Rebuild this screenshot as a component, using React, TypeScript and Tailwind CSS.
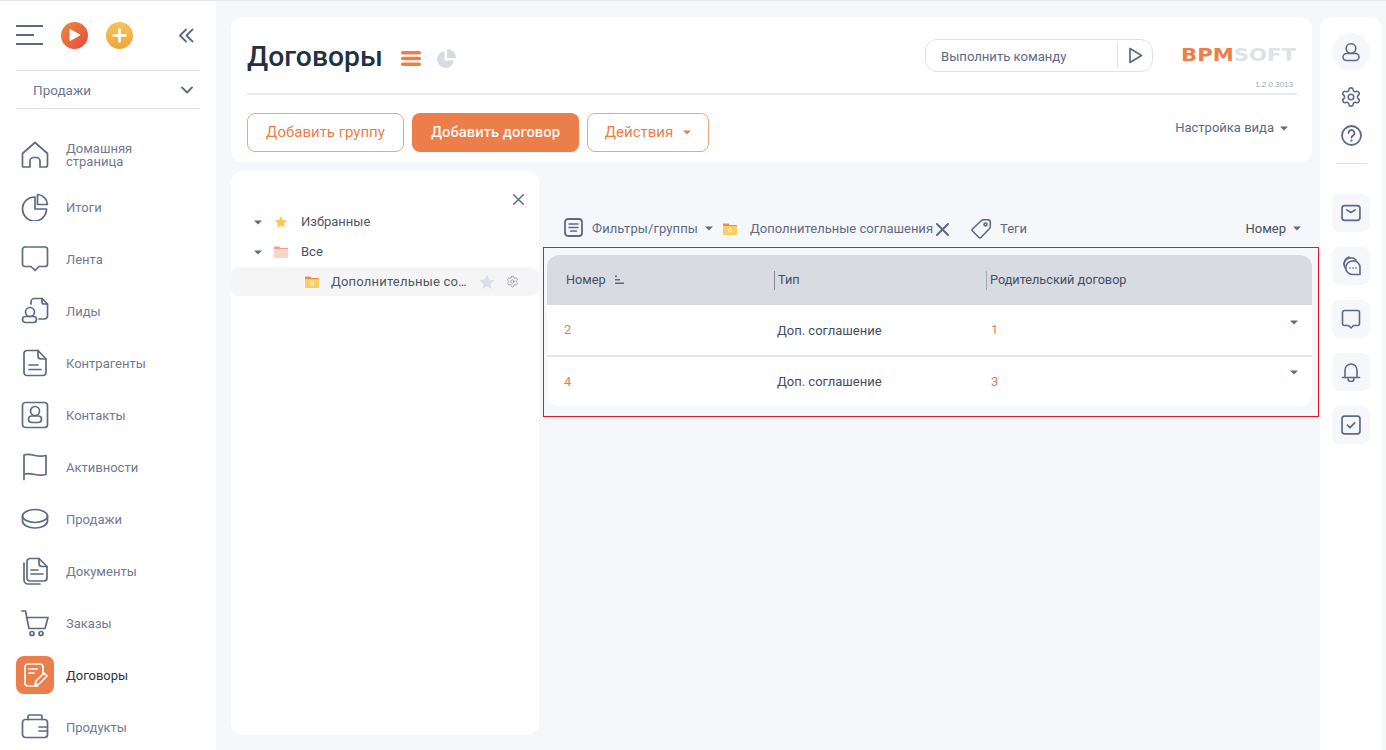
import React from "react";
import { Settings } from "lucide-react";

const S = "#5d6a87";
function Ico({ children, size = 28, vb = 28, sw = 1.7, color = S, cls = "" }: { children: React.ReactNode; size?: number; vb?: number; sw?: number; color?: string; cls?: string }) {
  return (
    <svg width={size} height={size} viewBox={`0 0 ${vb} ${vb}`} fill="none" stroke={color} strokeWidth={sw} strokeLinecap="round" strokeLinejoin="round" className={`shrink-0 ${cls}`}>
      {children}
    </svg>
  );
}
function Caret({ color = "#5d6a87", w = 8 }: { color?: string; w?: number }) {
  return (
    <svg width={w} height={w / 2 + 1} viewBox="0 0 8 5" className="shrink-0">
      <path d="M0 0.5h8L4 4.5z" fill={color} />
    </svg>
  );
}
const nav: { t: React.ReactNode; i: React.ReactNode; active?: boolean }[] = [
  { t: <>Домашняя<br />страница</>, i: <path d="M1.5 25V12.5L14 1.5l12.500 11V24a2 2 0 0 1-2 2H19v-6a3.500 3.500 0 0 0-3.500-3.500h-3A3.500 3.500 0 0 0 9 20v6H2.500a1 1 0 0 1-1-1z" /> },
  { t: "Итоги", i: <><path d="M14 4a12 12 0 1 0 11.500 12H14z" /><path d="M16.500 1.500a10.500 10.500 0 0 1 10 10h-10z" /></> },
  { t: "Лента", i: <path d="M4 2h20a2.500 2.500 0 0 1 2.500 2.500V19a2.500 2.500 0 0 1-2.500 2.500h-6L14 25.500 10 21.500H4A2.500 2.500 0 0 1 1.500 19V4.500A2.500 2.500 0 0 1 4 2z" /> },
  { t: "Лиды", i: <><path d="M10 7V5a3.500 3.500 0 0 1 3.500-3.500H21L26.500 7v12a3 3 0 0 1-3 3H18" /><path d="M21 1.500V5a2 2 0 0 0 2 2h3.500" /><circle cx="9" cy="15" r="4.500" /><rect x="1.500" y="19.500" width="14" height="6" rx="3" /></> },
  { t: "Контрагенты", i: <><path d="M6 1.500h11L25 10v13.500a3 3 0 0 1-3 3H6a3 3 0 0 1-3-3v-19a3 3 0 0 1 3-3z" /><path d="M17 1.500V7a3 3 0 0 0 3 3h5" /><path d="M8 16h9M8 20.500h12" /></> },
  { t: "Контакты", i: <><rect x="1.500" y="1.500" width="25" height="25" rx="3" /><circle cx="14" cy="10" r="4.500" /><rect x="7.500" y="15" width="13" height="6.500" rx="3.200" /></> },
  { t: "Активности", i: <path d="M3 26.500V2c4-1.500 7-.500 11 .500s7 1 11 0v19c-4 1-7 1-11 0s-7-1.500-11-.500" /> },
  { t: "Продажи", i: <><ellipse cx="14" cy="11" rx="12.500" ry="6.500" /><path d="M1.500 11v5c0 4 5.500 7 12.500 7s12.500-3 12.500-7v-5" /></> },
  { t: "Документы", i: <><path d="M6 5v17a4 4 0 0 0 4 4h12" transform="translate(-3 1)" /><path d="M9 1.500h9L26 9.500V21a3 3 0 0 1-3 3H9a3 3 0 0 1-3-3V4.500a3 3 0 0 1 3-3z" /><path d="M18 1.500V6.500a3 3 0 0 0 3 3h5" /><path d="M10 13h7M10 17h12" /></> },
  { t: "Заказы", i: <><path d="M1 2h3.500L8 19.500h16l3-11H5.500" /><circle cx="11" cy="24.500" r="2" /><circle cx="20" cy="24.500" r="2" /></> },
  { t: "Договоры", active: true, i: <><path d="M22 12V6a3 3 0 0 0-3-3H7a3 3 0 0 0-3 3v16a3 3 0 0 0 3 3h10" /><path d="M8 8h8M8 12h5" /><path d="M14 24l1-4 8-8 3 3-8 8z" /></> },
  { t: "Продукты", i: <><rect x="1.500" y="6.500" width="25" height="18" rx="3" /><path d="M7 6.500V3.500a1.500 1.500 0 0 1 1.500-1.500h11A1.500 1.500 0 0 1 21 3.500v3" /><path d="M18 14h8.500M18 18h8.500" /></> },
];

function Folder({ base, top, mark }: { base: string; top: string; mark?: boolean }) {
  return (
    <svg width="14" height="12" viewBox="0 0 14 12" className="shrink-0">
      <path d="M0 1h5.500l1 1H14v10H0z" fill={base} />
      <path d="M0 0.500h5.500l1 1.500H14v1H0z" fill={top} />
      {mark && <circle cx="7" cy="7.500" r="1.500" fill="none" stroke="#fff" strokeWidth="0.800" />}
    </svg>
  );
}

function Side({ children }: { children: React.ReactNode }) {
  return <div className="w-[38px] h-[38px] rounded-lg bg-[#f5f7fb] flex items-center justify-center">{children}</div>;
}

export default function App() {
  return (
    <div className="w-[1386px] h-[750px] overflow-hidden bg-[#f5f7fb] border-t border-[#e4e6ea] flex text-[13px] text-[#5d6a87]" style={{ fontFamily: "Roboto, 'Noto Sans', sans-serif" }}>
      {/* left sidebar */}
      <aside className="w-[216px] shrink-0 bg-white flex flex-col overflow-hidden">
        <div className="h-[69px] shrink-0 pl-4 pr-[22px] flex items-center pb-[1px]">
          <div className="w-[27px] flex flex-col gap-[7px]">
            <div className="h-[2px] w-[27px] bg-[#5d6a87]" />
            <div className="h-[2px] w-[18px] bg-[#5d6a87]" />
            <div className="h-[2px] w-[27px] bg-[#5d6a87]" />
          </div>
          <div className="ml-[18px] w-[27px] h-[27px] rounded-full bg-gradient-to-br from-[#ec8a3c] to-[#e5443f] flex items-center justify-center">
            <svg width="12" height="14" viewBox="0 0 12 14"><path d="M1 1.500L11 7 1 12.500z" fill="#fff" stroke="#fff" strokeLinejoin="round" /></svg>
          </div>
          <div className="ml-[18px] w-[27px] h-[27px] rounded-full bg-gradient-to-b from-[#f4c55a] to-[#eaa63c] flex items-center justify-center">
            <svg width="15" height="15" viewBox="0 0 15 15"><path d="M7.500 1.500v12M1.500 7.500h12" stroke="#fff" strokeWidth="2.600" strokeLinecap="round" /></svg>
          </div>
          <svg width="15" height="15" viewBox="0 0 15 15" className="ml-auto" fill="none" stroke={S} strokeWidth="1.800" strokeLinecap="round" strokeLinejoin="round"><path d="M7 1.500L1 7.500l6 6M13.500 1.500l-6 6 6 6" /></svg>
        </div>
        <div className="mx-4 h-[39px] shrink-0 border-y border-[#dfe2e9] flex items-center pl-[17px] pr-[7px] text-[13.500px] text-[#6d7892]">
          <span className="pt-[1px]">Продажи</span>
          <svg width="12" height="8" viewBox="0 0 12 8" className="ml-auto" fill="none" stroke={S} strokeWidth="1.800" strokeLinecap="round" strokeLinejoin="round"><path d="M1 1.500l5 5 5-5" /></svg>
        </div>
        <nav className="mt-[20px] flex flex-col">
          {nav.map((n, i) => (
            <div key={i} className="h-[52px] shrink-0 flex items-center pl-4">
              <div className={`w-[38px] h-[38px] rounded-lg flex items-center justify-center ${n.active ? "bg-[#ec7e4b]" : ""}`}>
                <Ico color={n.active ? "#ffffff" : S}>{n.i}</Ico>
              </div>
              <span className={`ml-3 text-[13px] leading-[13px] ${n.active ? "text-[#2b3445]" : "text-[#6f7a94]"}`}>{n.t}</span>
            </div>
          ))}
        </nav>
      </aside>

      {/* centre */}
      <main className="w-[1081px] ml-[15px] shrink-0 flex flex-col pt-4">
        <header className="h-[145px] shrink-0 bg-white rounded-xl pl-4 pr-[15px] flex flex-col">
          <div className="h-[78px] shrink-0 border-b-2 border-[#e8ebf0] flex items-start">
            <h1 className="mt-[18px] text-[28.300px] leading-[44px] font-medium text-[#25303f]">Договоры</h1>
            <svg width="20" height="15" viewBox="0 0 20 15" className="ml-[18px] mt-[34px]" fill="#ec7e4b"><rect width="20" height="3.600" rx="1.800" /><rect y="5.700" width="20" height="3.600" rx="1.800" /><rect y="11.400" width="20" height="3.600" rx="1.800" /></svg>
            <svg width="20" height="20" viewBox="0 0 20 20" className="ml-[15px] mt-[32px]" fill="#d8dbe3"><path d="M8.500 2a8.500 8.500 0 1 0 9.500 9.500H8.500z" /><path d="M11 0a9 9 0 0 1 9 9h-9z" /></svg>
            <div className="ml-auto flex flex-col items-end">
              <div className="flex items-center mt-[22px]">
                <div className="w-[228px] h-[33px] rounded-xl border border-[#dfe2e9] flex items-center pl-[15px] text-[13.100px] text-[#5d6a87]">
                  <span className="pt-[2px]">Выполнить команду</span>
                  <div className="ml-auto w-px h-[24px] bg-[#dfe2e9]" />
                  <svg width="15" height="17" viewBox="0 0 15 17" className="ml-[10px] mr-[9px]" fill="none" stroke={S} strokeWidth="1.700" strokeLinejoin="round"><path d="M2 1.500L13.500 8.500 2 15.500z" /></svg>
                </div>
                <div className="ml-[28px] w-[116px] h-[17px]">
                  <div className="inline-block origin-left scale-x-[1.21] leading-[17px] whitespace-nowrap text-[17.500px] font-bold" style={{ fontFamily: "'DejaVu Sans', sans-serif" }}>
                    <span className="text-[#ec7e4b]">BPM</span><span className="text-[#dfe2e8]">SOFT</span>
                  </div>
                </div>
              </div>
              <div className="mt-[8px] mr-[4px] text-[8px] leading-[10px] text-[#a4a8b2]" style={{ fontFamily: "Liberation Sans, sans-serif" }}>1.2.0.3013</div>
            </div>
          </div>
          <div className="flex items-start">
            <div className="mt-[18px] h-[39px] w-[157px] rounded-lg border border-[#f3a283] flex items-center justify-center text-[15px] text-[#ec7e4b] bg-white">Добавить группу</div>
            <div className="ml-2 mt-[18px] h-[39px] w-[167px] rounded-lg bg-[#ec7e4b] flex items-center justify-center text-[14.800px] font-medium text-white/95">Добавить договор</div>
            <div className="ml-2 mt-[18px] h-[39px] w-[122px] rounded-lg border border-[#f3a283] flex items-center justify-center gap-[10px] text-[15px] text-[#ec7e4b]">Действия <Caret color="#ec7e4b" /></div>
            <div className="ml-auto mr-[9px] mt-[25px] flex items-center gap-[6px] text-[13px] leading-[16px] text-[#5d6a87]">Настройка вида <Caret /></div>
          </div>
        </header>

        <div className="flex-1 flex mt-[9px] min-h-0">
          <section className="w-[308px] h-[564px] shrink-0 bg-white rounded-xl flex flex-col">
            <div className="flex justify-end pr-[15px] pt-[23px] h-[36px]">
              <svg width="11" height="11" viewBox="0 0 11 11" fill="none" stroke={S} strokeWidth="1.400" strokeLinecap="round" className="shrink-0"><path d="M0.700 0.700l9.600 9.600M10.300 0.700L0.700 10.300" /></svg>
            </div>
            <div className="h-[30px] flex items-center pl-[23px] text-[13px] text-[#4d5566]">
              <Caret />
              <svg width="14" height="14" viewBox="0 0 24 24" className="ml-[12px]" fill="#f6c850"><path d="M12 1.500l3.200 7 7.600.800-5.700 5.100 1.600 7.500L12 18l-6.700 3.900 1.600-7.500L1.200 9.300l7.600-.800z" /></svg>
              <span className="ml-[13px]">Избранные</span>
            </div>
            <div className="h-[30px] flex items-center pl-[23px] text-[13px] text-[#4d5566]">
              <Caret />
              <span className="ml-[12px]"><Folder base="#f8d5c8" top="#f2a288" /></span>
              <span className="ml-[13px]">Все</span>
            </div>
            <div className="h-[29px] rounded-lg bg-[#f5f5f6] flex items-center pl-[74px] text-[13px] text-[#4d5566]">
              <Folder base="#f8cf60" top="#ec8b4c" mark />
              <span className="ml-[12px] w-[139px] whitespace-nowrap tracking-[0.2px]">Дополнительные со…</span>
              <svg width="16" height="16" viewBox="0 0 24 24" className="ml-[9px] shrink-0" fill="#dcdfe6"><path d="M12 1l3.400 7.300 8 .900-6 5.400 1.700 7.900L12 18.500l-7.100 4 1.700-7.900-6-5.400 8-.900z" /></svg>
              <Settings size={13} strokeWidth={1.600} color="#8d95a8" className="ml-[11px] shrink-0" />
            </div>
          </section>

          <section className="flex-1 ml-[4px] min-w-0 flex flex-col">
            <div className="h-[76px] shrink-0 pt-[47px] pl-[21px] pr-[11px] flex items-start text-[13px] text-[#5d6a87] leading-[22px]">
              <Ico size={19} vb={19} sw={1.500}><rect x="1" y="1" width="17" height="17" rx="3" strokeWidth="1.800" /><path d="M5 6h9M5 9.500h9M6.500 13h6" /></Ico>
              <span className="ml-[9px] tracking-[0.1px]">Фильтры/группы</span>
              <span className="ml-[7px] mt-[8px]"><Caret /></span>
              <span className="ml-[10px] mt-[5px]"><Folder base="#f8cf60" top="#ec8b4c" mark /></span>
              <span className="ml-[13px] w-[184px] whitespace-nowrap">Дополнительные соглашения</span>
              <svg width="13" height="13" viewBox="0 0 13 13" className="ml-[2px] mt-[5px] shrink-0" fill="none" stroke={S} strokeWidth="2" strokeLinecap="round"><path d="M1 1l11 11M12 1L1 12" /></svg>
              <svg width="21" height="21" viewBox="0 0 21 21" className="ml-[22px] shrink-0" fill="none" stroke={S} strokeWidth="1.600" strokeLinejoin="round"><path d="M1.500 11L10.500 2.500a3 3 0 0 1 2-.800H17a2.300 2.300 0 0 1 2.300 2.300V8.500a3 3 0 0 1-.800 2L10 19.500a1.500 1.500 0 0 1-2 0L1.500 13a1.500 1.500 0 0 1 0-2z" /><circle cx="14.500" cy="6.500" r="1.500" /></svg>
              <span className="ml-[8px]">Теги</span>
              <span className="ml-auto text-[#444e62]">Номер</span>
              <span className="ml-[7px] mt-[8px]"><Caret /></span>
            </div>
            <div className="w-[776px] h-[170px] border border-[#e0172b] pl-[3px] pr-[6px] pt-[7px] shrink-0">
              <div className="rounded-xl bg-white overflow-hidden h-[151px]">
                <div className="h-[50px] bg-[#d8dbe2] grid grid-cols-[228px_212px_1fr] items-center text-[12.700px] text-[#444e62]">
                  <div className="pl-[19px] flex items-center gap-[9px]">
                    Номер
                    <svg width="9" height="10" viewBox="0 0 9 10" fill={S}><rect x="0" y="0.500" width="2" height="1.500" /><rect x="0" y="4" width="5" height="1.500" /><rect x="0" y="7.500" width="9" height="1.500" /></svg>
                  </div>
                  <div className="border-l border-[#7f879a] h-[19px] flex items-center -ml-[1px] pl-[3px]">Тип</div>
                  <div className="border-l border-[#a2a8b6] h-[19px] flex items-center -ml-[1px] pl-[3px] w-[300px]">Родительский договор</div>
                </div>
                {[["2", "1"], ["4", "3"]].map(([a, b], i) => (
                  <div key={a} className={`grid grid-cols-[228px_212px_1fr] items-center ${i === 0 ? "h-[52px] border-b-2 border-[#e3e5ea]" : "h-[49px]"} relative`}>
                    <div className="pl-[17px] text-[#ef7a52]">{a}</div>
                    <div className="pl-[3px] text-[#444e62] -ml-[1px] pt-[1px]">Доп. соглашение</div>
                    <div className="pl-[5px] -ml-[1px] text-[#ef7a52]">{b}</div>
                    <span className={`absolute right-[14px] ${i === 0 ? "top-[15px]" : "top-[13px]"}`}><Caret /></span>
                  </div>
                ))}
              </div>
            </div>
          </section>
        </div>
      </main>

      {/* right sidebar */}
      <aside className="w-[62px] ml-[8px] mt-4 shrink-0 bg-white rounded-t-xl flex flex-col items-center pt-[16px]">
        <div className="w-[38px] h-[38px] rounded-full bg-[#f5f7fb] flex items-center justify-center">
          <Ico size={20} vb={20} sw={1.600}><circle cx="10" cy="6.500" r="4.800" /><rect x="2" y="11.500" width="16" height="7" rx="3.500" /></Ico>
        </div>
        <div className="mt-[15px]">
          <Settings size={22} strokeWidth={1.700} color={S} />
        </div>
        <div className="mt-[17px]">
          <Ico size={21} vb={21} sw={1.800}><circle cx="10.500" cy="10.500" r="9.500" /><path d="M7.500 8a3 3 0 1 1 4.500 2.600c-1 .600-1.500 1-1.500 2" /><path d="M10.500 15.500v.200" strokeWidth="2.200" /></Ico>
        </div>
        <div className="mt-[17px] w-[31px] h-px bg-[#e0e3e9]" />
        <div className="mt-[30px] flex flex-col gap-[15px]">
          <Side><Ico size={20} vb={19} sw={1.600}><rect x="1" y="2.500" width="17" height="14" rx="2.500" /><path d="M5.500 6.500l4 2.500 4-2.500" /></Ico></Side>
          <Side><Ico size={20} vb={20} sw={1.600}><path d="M5 13A7.500 7.500 0 0 1 8 1" /><path d="M3 8a7 7 0 0 1 12-4" /><path d="M11.500 5A6.500 6.500 0 0 1 19 11.500V18.500H11.500a6.500 6.500 0 0 1 0-13.500z" /><path d="M9 12h.1M12 12h.1M15 12h.1" /></Ico></Side>
          <Side><Ico size={20} vb={20} sw={1.600}><path d="M3.500 1.500h13a2 2 0 0 1 2 2v11a2 2 0 0 1-2 2h-4L10 19l-2.500-2.500h-4a2 2 0 0 1-2-2v-11a2 2 0 0 1 2-2z" /></Ico></Side>
          <Side><Ico size={20} vb={20} sw={1.600}><path d="M4 14.500V8a6 6 0 0 1 12 0v6.500" /><path d="M1.500 15.500h17" /><path d="M7 16.500a3 3 0 0 0 6 0" /></Ico></Side>
          <Side><Ico size={20} vb={19} sw={1.600}><rect x="1" y="1" width="17" height="17" rx="2.500" /><path d="M6 9.500l2.500 2.500L13 7.500" /></Ico></Side>
        </div>
      </aside>
    </div>
  );
}
